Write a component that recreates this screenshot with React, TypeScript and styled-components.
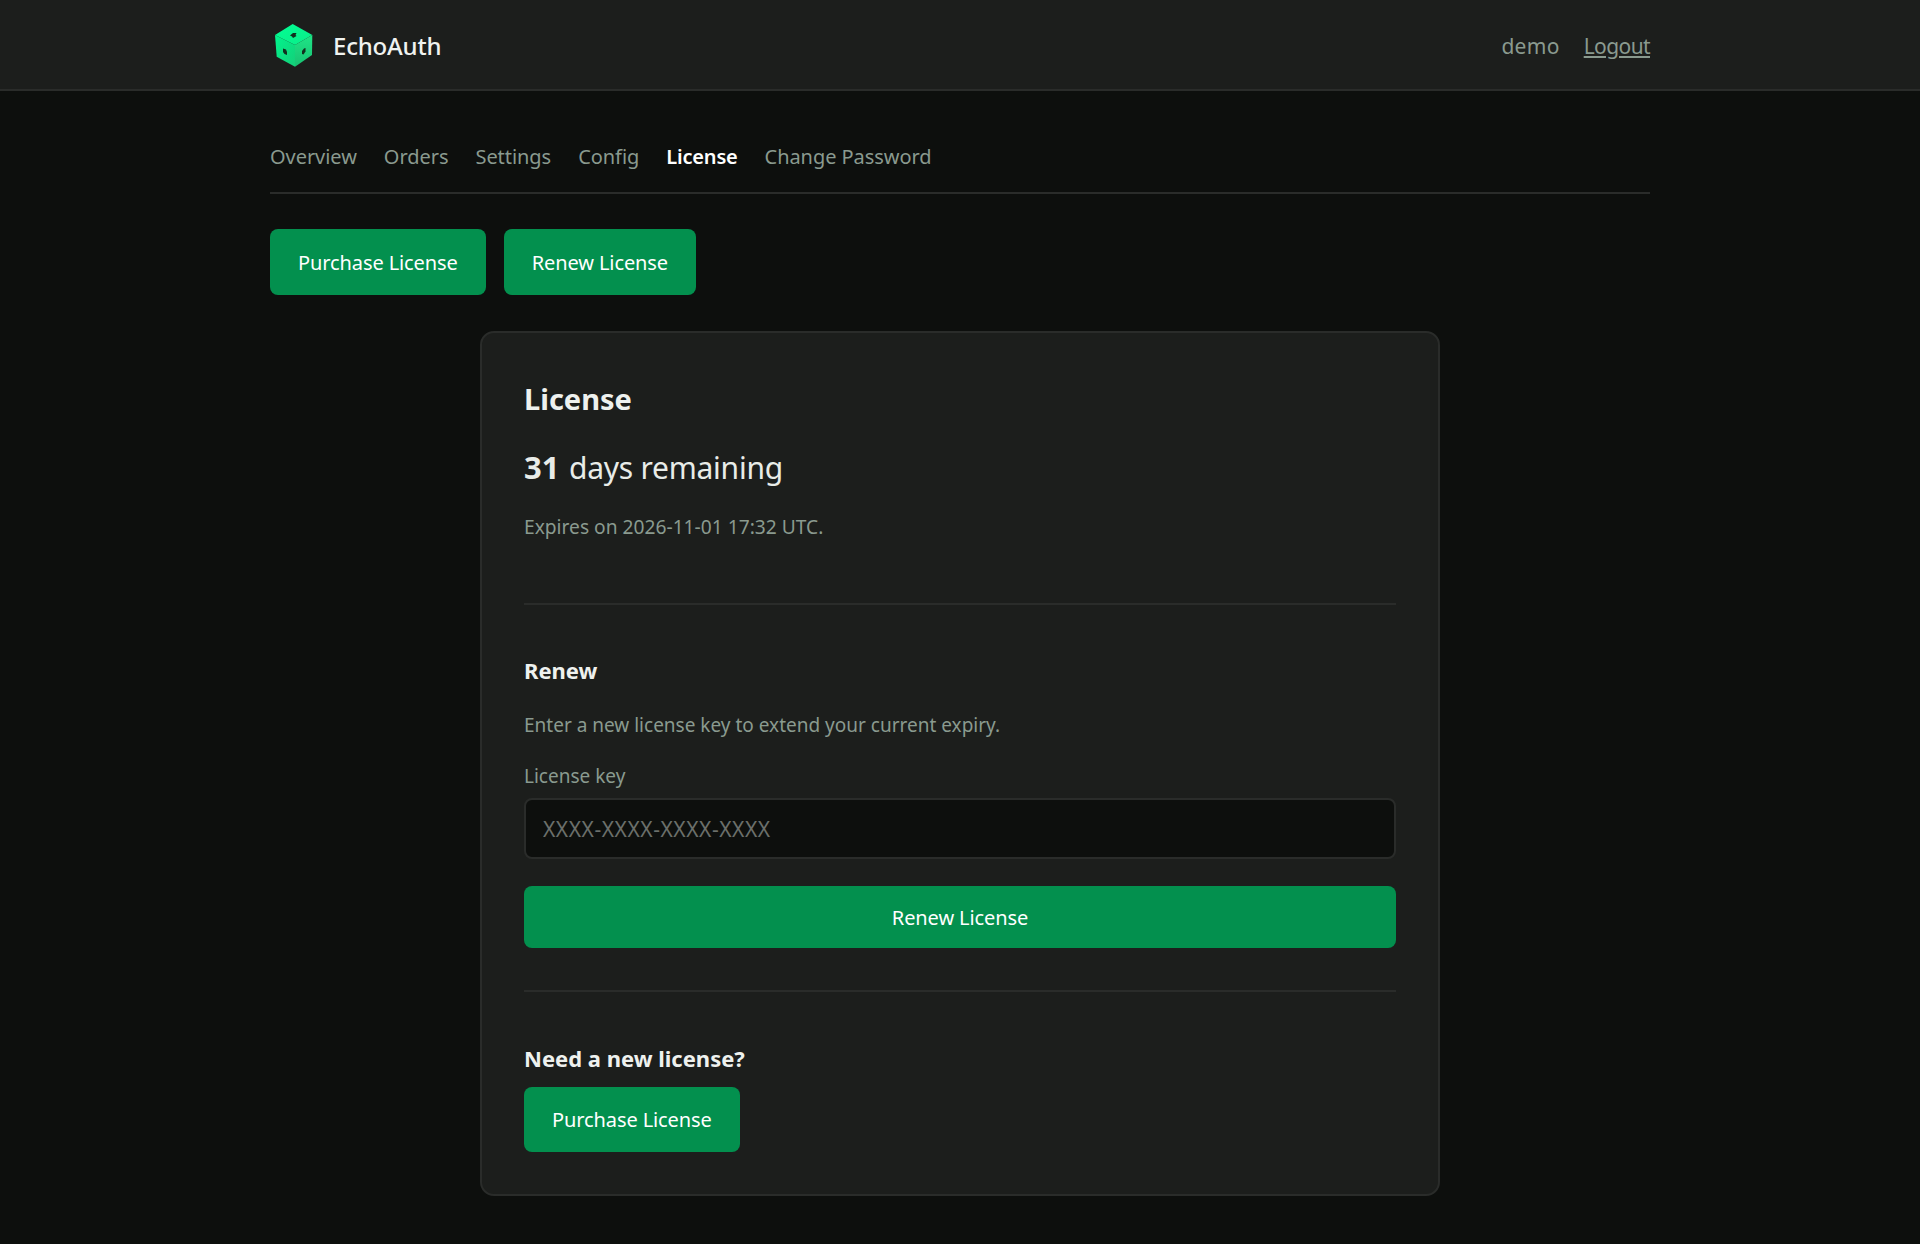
import React from "react";
import styled, { createGlobalStyle } from "styled-components";

const Global = createGlobalStyle`
  html, body { margin: 0; padding: 0; background: #0d0f0d; }
  body { font-family: "Noto Sans", "Open Sans", sans-serif; color: #e8ece8; }
  * { box-sizing: border-box; }
`;
const Page = styled.div`min-height: 1244px; background: #0d0f0d;`;
const Header = styled.header`
  height: 91px; padding-top: 2px; background: #1c1e1c; border-bottom: 2px solid #2a2c2a;
  display: flex; justify-content: center;
`;
const Inner = styled.div`width: 1380px; display: flex; align-items: center; justify-content: space-between;`;
const Brand = styled.a`display: flex; align-items: center; gap: 19px; padding-left: 4px; font-size: 24px; font-weight: 500; color: #f0f3f0; letter-spacing: -0.2px;`;
const UserBox = styled.div`display: flex; align-items: center; gap: 24px; font-size: 21px; color: #8a9a8f;`;
const UserName = styled.span`letter-spacing: 0.3px;`;
const Logout = styled.a`color: #8a9a8f; letter-spacing: -0.6px; text-decoration: underline;`;
const Main = styled.main`width: 1380px; margin: 0 auto;`;
const Tabs = styled.nav`
  display: flex; gap: 27px; height: 103px; padding-top: 51px; border-bottom: 2px solid #2a2c2a;
`;
const Tab = styled.a<{ $active?: boolean }>`
  font-size: 20px; line-height: 30px; color: ${p => (p.$active ? "#ffffff" : "#8a9a8f")};
  font-weight: ${p => (p.$active ? 600 : 400)}; letter-spacing: ${p => (p.$active ? "-0.2px" : "-0.05px")};
`;
const Actions = styled.div<{ $top: number }>`display: flex; gap: 18px; margin-top: ${p => p.$top}px;`;
const Button = styled.button<{ $block?: boolean; $height: number }>`
  display: flex; align-items: center; justify-content: center;
  width: ${p => (p.$block ? "100%" : "auto")}; height: ${p => p.$height}px; padding: 0 28px;
  background: #03904e; color: #fff; border: none; border-radius: 8px;
  font: 400 20px "Noto Sans", sans-serif; letter-spacing: -0.1px;
`;
const Card = styled.section`
  width: 960px; height: 865px; margin: 36px auto 0; padding: 45px 42px 42px;
  background: #1c1e1c; border: 2px solid #2a2c2a; border-radius: 14px;
`;
const Title = styled.h1`margin: 0; font-size: 29px; line-height: 42px; font-weight: 700; color: #eef1ee;`;
const Remaining = styled.p`
  margin: 26px 0 0; font-size: 30px; line-height: 42px; letter-spacing: -0.25px; color: #e8ece8;
  strong { font-weight: 700; font-size: 31px; letter-spacing: 0; margin-right: 2px; }
`;
const Expires = styled.p`margin: 23px 0 0; font-size: 19.2px; line-height: 30px; color: #8a9a8f;`;
const Rule = styled.hr<{ $top: number }>`margin: ${p => p.$top}px 0 0; border: 0; border-top: 2px solid #2a2c2a;`;
const SectionTitle = styled.h2<{ $top: number }>`
  margin: ${p => p.$top}px 0 0; font-size: 22px; line-height: 32px; font-weight: 700; color: #eef1ee;
`;
const Hint = styled.p`margin: 24px 0 0; font-size: 19px; line-height: 30px; color: #8a9a8f;`;
const Label = styled.label`display: block; margin-top: 21px; font-size: 19px; line-height: 30px; color: #8a9a8f;`;
const Input = styled.input`
  display: block; width: 100%; height: 61px; margin: 7px 0 27px; padding: 0 17px;
  background: #0d0f0d; border: 2px solid #2a2c2a; border-radius: 8px; color: #e8ece8;
  font: 400 21px "Noto Sans", sans-serif; letter-spacing: 0.55px;
  &::placeholder { color: #6b6f6b; opacity: 1; }
`;

function Logo() {
  return (
    <svg width="40" height="46" viewBox="0 0 40 46" aria-hidden="true">
      <defs>
        <linearGradient id="top" x1="0" y1="0" x2="1" y2="1"><stop offset="0" stopColor="#00ff94" /><stop offset="1" stopColor="#0cec88" /></linearGradient>
        <linearGradient id="left" x1="0" y1="0" x2="1" y2="1"><stop offset="0" stopColor="#00f58d" /><stop offset="1" stopColor="#14cf79" /></linearGradient>
        <linearGradient id="right" x1="0" y1="0" x2="0" y2="1"><stop offset="0" stopColor="#1fe586" /><stop offset="1" stopColor="#17c272" /></linearGradient>
      </defs>
      <path d="M18.7 1 38.3 12 21 22 1 12Z" fill="url(#top)" />
      <path d="M1 12 21 22 21 43.7 2.7 33.7Z" fill="url(#left)" />
      <path d="M38.3 12 38 32 21 43.7V22Z" fill="url(#right)" />
      <path d="M16 12.5l3-2.5h3.5l-1 2 1 1-3.5 2-1-1.5Z" fill="#12301f" />
      <path d="M9 25.5l3 1 1 2.5v3l-2.5-1-1.5-2Z" fill="#12301f" />
      <path d="M30 25.5l1.5-.5v3.5l-2 3-1.5-.5v-3Z" fill="#12301f" />
    </svg>
  );
}

export default function App() {
  return (
    <Page>
      <Global />
      <Header>
        <Inner>
          <Brand><Logo />EchoAuth</Brand>
          <UserBox><UserName>demo</UserName><Logout>Logout</Logout></UserBox>
        </Inner>
      </Header>
      <Main>
        <Tabs>
          <Tab>Overview</Tab><Tab>Orders</Tab><Tab>Settings</Tab><Tab>Config</Tab>
          <Tab $active>License</Tab><Tab>Change Password</Tab>
        </Tabs>
        <Actions $top={35}>
          <Button $height={66}>Purchase License</Button>
          <Button $height={66}>Renew License</Button>
        </Actions>
        <Card>
          <Title>License</Title>
          <Remaining><strong>31</strong> days remaining</Remaining>
          <Expires>Expires on 2026-11-01 17:32 UTC.</Expires>
          <Rule $top={61} />
          <SectionTitle $top={49}>Renew</SectionTitle>
          <Hint>Enter a new license key to extend your current expiry.</Hint>
          <Label>License key</Label>
          <Input placeholder="XXXX-XXXX-XXXX-XXXX" />
          <Button $block $height={62}>Renew License</Button>
          <Rule $top={42} />
          <SectionTitle $top={50}>Need a new license?</SectionTitle>
          <Actions $top={13}>
            <Button $height={65}>Purchase License</Button>
          </Actions>
        </Card>
      </Main>
    </Page>
  );
}
